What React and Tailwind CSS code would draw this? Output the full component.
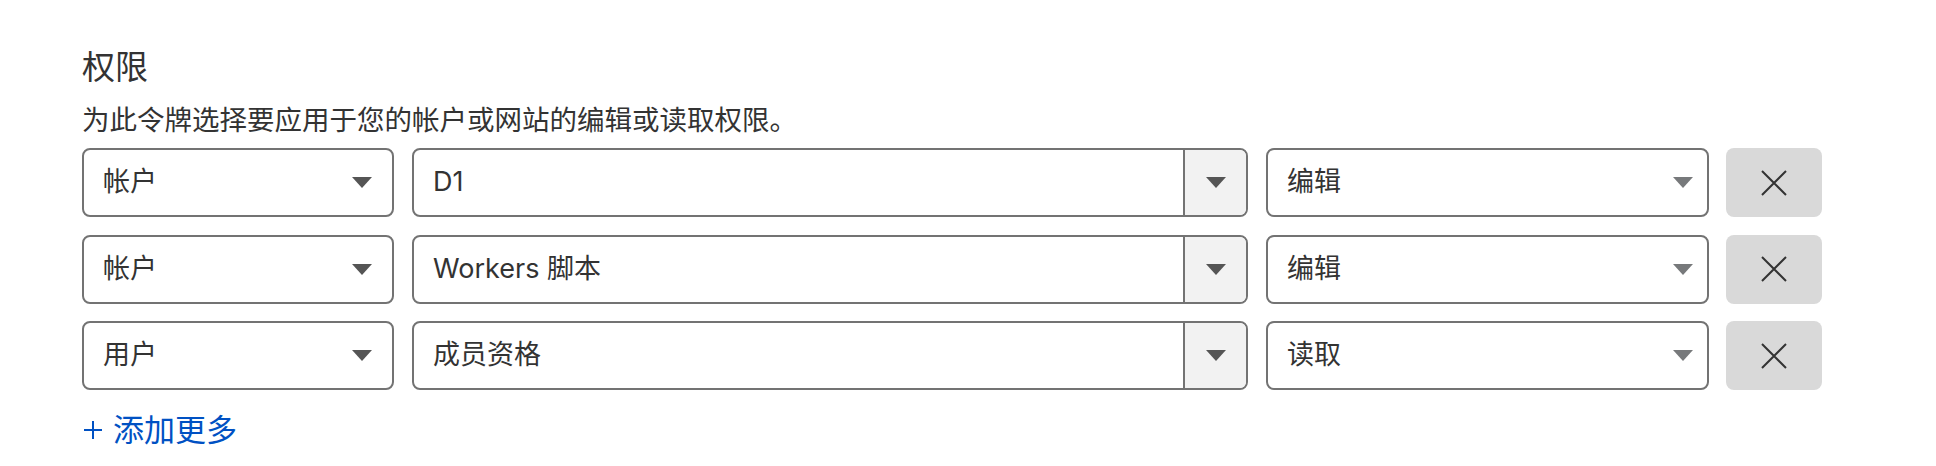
import React from "react";

const FONT = { fontFamily: 'Inter, "Noto Sans CJK SC", sans-serif' };

function Tri({ color }) {
  return (
    <svg width="20" height="11" viewBox="0 0 20 11" className="shrink-0">
      <polygon points="0,0 20,0 10,11" fill={color} />
    </svg>
  );
}

function XIcon() {
  return (
    <svg width="26" height="26" viewBox="0 0 26 26">
      <path d="M1 1 L25 25 M25 1 L1 25" stroke="#333333" strokeWidth="2" fill="none" />
    </svg>
  );
}

function Plus() {
  return (
    <svg width="18" height="18" viewBox="0 0 18 18" className="shrink-0">
      <path d="M9 0 V18 M0 9 H18" stroke="#0051c3" strokeWidth="2" fill="none" />
    </svg>
  );
}

function Row({ a, b, c }) {
  return (
    <div className="flex h-[69px] items-stretch">
      <div className="flex w-[312px] items-center justify-between rounded-[8px] border-2 border-[#737373] pl-[19px] pr-[20px]">
        <span>{a}</span>
        <Tri color="#555555" />
      </div>
      <div className="ml-[18px] flex w-[836px] items-stretch overflow-hidden rounded-[8px] border-2 border-[#737373]">
        <div className="flex flex-1 items-center pl-[19px]">
          <span>{b}</span>
        </div>
        <div className="flex w-[63px] items-center justify-center border-l-2 border-[#737373] bg-[#f2f2f2]">
          <Tri color="#555555" />
        </div>
      </div>
      <div className="ml-[18px] flex w-[443px] items-center justify-between rounded-[8px] border-2 border-[#737373] pl-[19px] pr-[14px]">
        <span>{c}</span>
        <Tri color="#77797b" />
      </div>
      <button className="ml-[17px] flex w-[96px] items-center justify-center rounded-[8px] bg-[#d9d9d9]">
        <XIcon />
      </button>
    </div>
  );
}

export default function App() {
  return (
    <div className="min-h-[466px] w-[1936px] bg-white text-[#333333]" style={FONT}>
      <div className="pl-[82px] pt-[47px]">
        <div className="text-[33px] leading-[40px]">权限</div>
        <div className="mt-[15px] text-[27.5px] leading-[36px]">为此令牌选择要应用于您的帐户或网站的编辑或读取权限。</div>
        <div className="mt-[10px] flex flex-col gap-[17.5px] text-[27px]">
          <Row a="帐户" b="D1" c="编辑" />
          <Row a="帐户" b="Workers 脚本" c="编辑" />
          <Row a="用户" b="成员资格" c="读取" />
        </div>
        <div className="mt-[20px] flex h-[40px] items-center text-[31px] text-[#0051c3]">
          <span className="ml-[2px] mr-[11px] flex"><Plus /></span>
          <span>添加更多</span>
        </div>
      </div>
    </div>
  );
}
